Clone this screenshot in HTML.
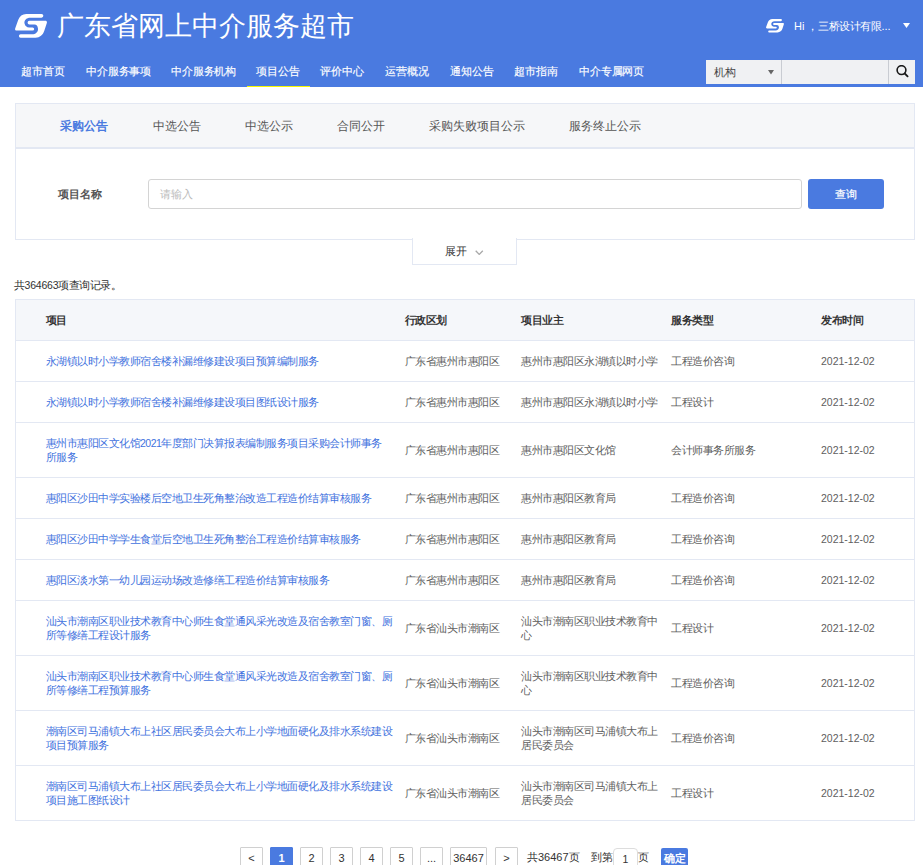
<!DOCTYPE html>
<html><head><meta charset="utf-8">
<style>
*{box-sizing:border-box;margin:0;padding:0}
html,body{width:923px;height:865px;overflow:hidden;background:#fff;font-family:"Liberation Sans",sans-serif;color:#333}
.a{position:absolute;white-space:nowrap}
#hd{position:absolute;left:0;top:0;width:923px;height:87px;background:#4a7ae0}
.w{color:#fff}
.nav{position:absolute;top:62px;font-size:11px;line-height:18px;color:#fff;-webkit-text-stroke:0.15px #fff;letter-spacing:-0.15px}
.ul{position:absolute;left:247px;top:85.5px;width:63px;height:1.5px;background:#f8f800}
.sel{position:absolute;left:706px;top:60px;width:75px;height:24px;background:#f0f1f3}
.inp{position:absolute;left:781px;top:60px;width:108px;height:24px;background:#f0f1f3;border-left:1px solid #c9ccd2}
.btn{position:absolute;left:888px;top:60px;width:27px;height:24px;background:#f0f1f3;border-left:1px solid #c9ccd2}
#panel{position:absolute;left:15px;top:103px;width:900px;height:137px;border:1px solid #e3e8f3}
#tabs{position:absolute;left:0;top:0;width:898px;height:45px;background:#f6f7f9;border-bottom:2px solid #e3e8f3}
.tab{position:absolute;top:118px;font-size:12px;line-height:17px;color:#555}
.qin{position:absolute;left:148px;top:179px;width:654px;height:30px;border:1px solid #d4d4d4;border-radius:3px}
.qbtn{position:absolute;left:808px;top:179px;width:76px;height:30px;background:#4a7ae0;border-radius:3px}
.exp{position:absolute;left:412px;top:238px;width:105px;height:27px;border:1px solid #e3e8f3;border-top:none;background:#fff}
#tbl{position:absolute;left:15px;top:299px;width:900px;height:522px;border:1px solid #e3e8f3}
.row{position:absolute;left:0;width:898px;border-bottom:1px solid #e3e8f3}
.c{position:absolute;display:flex;align-items:center;font-size:10.5px;line-height:14px;letter-spacing:-0.5px}
.th{font-weight:bold;color:#333;white-space:nowrap}
.td{color:#5e5e5e;width:140px}
.lk{color:#3f72de;width:348px}
.dt{font-size:10.5px;letter-spacing:0}
.pg{position:absolute;top:847px;width:23px;height:22px;border:1px solid #d0d0d0;border-radius:1px;font-size:11px;line-height:20px;text-align:center;color:#333;background:#fff}
.pg.on{background:#4a7ae0;border-color:#4a7ae0;color:#fff;font-weight:bold}
.pin{position:absolute;top:848px;width:25px;height:22px;border:1px solid #ddd;border-radius:4px;font-size:10.5px;line-height:20px;text-align:center;color:#333;background:#fff}
.pbtn{position:absolute;top:848px;width:27px;height:20px;background:#4a7ae0;border-radius:2px;font-size:10.5px;line-height:20px;text-align:center;color:#fff;font-weight:bold;letter-spacing:-0.5px}
</style></head><body>
<div id="hd"></div>
<svg class="a" style="left:14.9px;top:14.1px" width="32" height="23.7" viewBox="100 125 655 485"><g fill="#fff">
<path d="M330 125H643A37.5 37.5 0 0 1 643 200H410C330 200 280 260 295 320C305 370 340 400 390 400H460A32.5 32.5 0 0 1 460 465H135C105 465 95 445 105 415L165 250C195 170 250 125 330 125Z"/>
<path d="M395 265H720C750 265 760 285 750 315L700 470C670 560 610 610 520 610H215A35 35 0 0 1 215 540H450C530 540 580 480 570 420C565 370 540 340 500 340H395A37.5 37.5 0 0 1 395 265Z"/>
</g></svg>
<div class="a w" style="left:57px;top:9px;font-size:27px;line-height:34px">广东省网上中介服务超市</div>

<svg class="a" style="left:766px;top:19px" width="18" height="13.5" viewBox="100 125 655 485"><g fill="#fff">
<path d="M330 125H643A37.5 37.5 0 0 1 643 200H410C330 200 280 260 295 320C305 370 340 400 390 400H460A32.5 32.5 0 0 1 460 465H135C105 465 95 445 105 415L165 250C195 170 250 125 330 125Z"/>
<path d="M395 265H720C750 265 760 285 750 315L700 470C670 560 610 610 520 610H215A35 35 0 0 1 215 540H450C530 540 580 480 570 420C565 370 540 340 500 340H395A37.5 37.5 0 0 1 395 265Z"/>
</g></svg>
<div class="a w" style="left:794px;top:18px;font-size:11px;line-height:16px">Hi ，<span style="font-size:10.5px;letter-spacing:-0.5px">三桥设计有限</span>...</div>
<svg class="a" style="left:903px;top:23px" width="7" height="5" viewBox="0 0 7 5"><path d="M0 0H7L3.5 5Z" fill="#fff"/></svg>

<div class="nav" style="left:21px">超市首页</div>
<div class="nav" style="left:86px">中介服务事项</div>
<div class="nav" style="left:171px">中介服务机构</div>
<div class="nav" style="left:256px">项目公告</div>
<div class="nav" style="left:320px">评价中心</div>
<div class="nav" style="left:385px">运营概况</div>
<div class="nav" style="left:450px">通知公告</div>
<div class="nav" style="left:514px">超市指南</div>
<div class="nav" style="left:579px">中介专属网页</div>
<div class="ul"></div>

<div class="sel"></div>
<div class="a" style="left:714px;top:64px;font-size:11px;line-height:16px;color:#444">机构</div>
<svg class="a" style="left:767.5px;top:70px" width="6" height="4.5" viewBox="0 0 6 4.5"><path d="M0 0H6L3 4.5Z" fill="#666"/></svg>
<div class="inp"></div>
<div class="btn"></div>
<svg class="a" style="left:895px;top:65px" width="15" height="14" viewBox="0 0 15 14"><circle cx="6.5" cy="5.1" r="4.4" fill="none" stroke="#1a1a1a" stroke-width="1.6"/><path d="M9.7 8.5L12.6 11.4" stroke="#1a1a1a" stroke-width="1.8" stroke-linecap="round"/></svg>

<div id="panel"><div id="tabs"></div></div>
<div class="tab" style="left:60px;color:#4a7ae0;font-weight:bold">采购公告</div>
<div class="tab" style="left:152.5px">中选公告</div>
<div class="tab" style="left:245px">中选公示</div>
<div class="tab" style="left:336.5px">合同公开</div>
<div class="tab" style="left:429px">采购失败项目公示</div>
<div class="tab" style="left:569px">服务终止公示</div>

<div class="a" style="left:58px;top:186px;font-size:11px;line-height:16px;font-weight:bold;color:#555">项目名称</div>
<div class="qin"></div>
<div class="a" style="left:160px;top:186px;font-size:11px;line-height:16px;color:#bbb">请输入</div>
<div class="qbtn"></div>
<div class="a w" style="left:835px;top:186px;font-size:11px;line-height:16px;-webkit-text-stroke:0.2px #fff">查询</div>

<div class="exp"></div>
<div class="a" style="left:445px;top:243px;font-size:11px;line-height:16px;color:#333">展开</div>
<svg class="a" style="left:475px;top:249.5px" width="8.5" height="5.5" viewBox="0 0 8.5 5.5"><path d="M0.7 0.7L4.25 4.4L7.8 0.7" fill="none" stroke="#a8a8a8" stroke-width="1.3"/></svg>

<div class="a" style="left:14px;top:276.5px;font-size:10.5px;line-height:16px;color:#333;letter-spacing:-0.5px">共<span style="letter-spacing:-0.2px">364663</span>项查询记录。</div>

<div id="tbl">
<div class="row" style="top:0;height:41px;background:#f5f7fa"></div>
<div class="row" style="top:41px;height:41px"></div>
<div class="row" style="top:82px;height:41px"></div>
<div class="row" style="top:123px;height:55px"></div>
<div class="row" style="top:178px;height:41px"></div>
<div class="row" style="top:219px;height:41px"></div>
<div class="row" style="top:260px;height:41px"></div>
<div class="row" style="top:301px;height:55px"></div>
<div class="row" style="top:356px;height:55px"></div>
<div class="row" style="top:411px;height:55px"></div>
<div class="row" style="top:466px;border-bottom:none;height:55px"></div>
</div>

<div class="pg" style="left:240px">&lt;</div>
<div class="pg on" style="left:270px">1</div>
<div class="pg" style="left:300px">2</div>
<div class="pg" style="left:330px">3</div>
<div class="pg" style="left:360px">4</div>
<div class="pg" style="left:390px">5</div>
<div class="pg" style="left:420px">...</div>
<div class="pg" style="left:450px;width:37px">36467</div>
<div class="pg" style="left:495px">&gt;</div>
<div class="a" style="left:527px;top:849px;font-size:10.5px;line-height:16px;color:#333">共<span style="font-size:11px">36467</span>页</div>
<div class="a" style="left:591px;top:849px;font-size:10.5px;line-height:16px;color:#333;letter-spacing:-0.5px">到第</div>
<div class="pin" style="left:613px">1</div>
<div class="a" style="left:638px;top:849px;font-size:10.5px;line-height:16px;color:#333">页</div>
<div class="pbtn" style="left:661px">确定</div>
<div id="cells">
<div class="c th" style="left:45.5px;top:299px;height:41px"><span>项目</span></div>
<div class="c th" style="left:404.5px;top:299px;height:41px"><span>行政区划</span></div>
<div class="c th" style="left:521px;top:299px;height:41px"><span>项目业主</span></div>
<div class="c th" style="left:671px;top:299px;height:41px"><span>服务类型</span></div>
<div class="c th" style="left:821px;top:299px;height:41px"><span>发布时间</span></div>
<div class="c lk" style="left:45.5px;top:340px;height:41px"><span>永湖镇以时小学教师宿舍楼补漏维修建设项目预算编制服务</span></div>
<div class="c td" style="left:404.5px;top:340px;height:41px"><span>广东省惠州市惠阳区</span></div>
<div class="c td ow" style="left:521px;top:340px;height:41px"><span>惠州市惠阳区永湖镇以时小学</span></div>
<div class="c td" style="left:671px;top:340px;height:41px"><span>工程造价咨询</span></div>
<div class="c td dt" style="left:821px;top:340px;height:41px"><span>2021-12-02</span></div>
<div class="c lk" style="left:45.5px;top:381px;height:41px"><span>永湖镇以时小学教师宿舍楼补漏维修建设项目图纸设计服务</span></div>
<div class="c td" style="left:404.5px;top:381px;height:41px"><span>广东省惠州市惠阳区</span></div>
<div class="c td ow" style="left:521px;top:381px;height:41px"><span>惠州市惠阳区永湖镇以时小学</span></div>
<div class="c td" style="left:671px;top:381px;height:41px"><span>工程设计</span></div>
<div class="c td dt" style="left:821px;top:381px;height:41px"><span>2021-12-02</span></div>
<div class="c lk" style="left:45.5px;top:422px;height:55px"><span>惠州市惠阳区文化馆2021年度部门决算报表编制服务项目采购会计师事务<br>所服务</span></div>
<div class="c td" style="left:404.5px;top:422px;height:55px"><span>广东省惠州市惠阳区</span></div>
<div class="c td ow" style="left:521px;top:422px;height:55px"><span>惠州市惠阳区文化馆</span></div>
<div class="c td" style="left:671px;top:422px;height:55px"><span>会计师事务所服务</span></div>
<div class="c td dt" style="left:821px;top:422px;height:55px"><span>2021-12-02</span></div>
<div class="c lk" style="left:45.5px;top:477px;height:41px"><span>惠阳区沙田中学实验楼后空地卫生死角整治改造工程造价结算审核服务</span></div>
<div class="c td" style="left:404.5px;top:477px;height:41px"><span>广东省惠州市惠阳区</span></div>
<div class="c td ow" style="left:521px;top:477px;height:41px"><span>惠州市惠阳区教育局</span></div>
<div class="c td" style="left:671px;top:477px;height:41px"><span>工程造价咨询</span></div>
<div class="c td dt" style="left:821px;top:477px;height:41px"><span>2021-12-02</span></div>
<div class="c lk" style="left:45.5px;top:518px;height:41px"><span>惠阳区沙田中学学生食堂后空地卫生死角整治工程造价结算审核服务</span></div>
<div class="c td" style="left:404.5px;top:518px;height:41px"><span>广东省惠州市惠阳区</span></div>
<div class="c td ow" style="left:521px;top:518px;height:41px"><span>惠州市惠阳区教育局</span></div>
<div class="c td" style="left:671px;top:518px;height:41px"><span>工程造价咨询</span></div>
<div class="c td dt" style="left:821px;top:518px;height:41px"><span>2021-12-02</span></div>
<div class="c lk" style="left:45.5px;top:559px;height:41px"><span>惠阳区淡水第一幼儿园运动场改造修缮工程造价结算审核服务</span></div>
<div class="c td" style="left:404.5px;top:559px;height:41px"><span>广东省惠州市惠阳区</span></div>
<div class="c td ow" style="left:521px;top:559px;height:41px"><span>惠州市惠阳区教育局</span></div>
<div class="c td" style="left:671px;top:559px;height:41px"><span>工程造价咨询</span></div>
<div class="c td dt" style="left:821px;top:559px;height:41px"><span>2021-12-02</span></div>
<div class="c lk" style="left:45.5px;top:600px;height:55px"><span>汕头市潮南区职业技术教育中心师生食堂通风采光改造及宿舍教室门窗、厕所等修缮工程设计服务</span></div>
<div class="c td" style="left:404.5px;top:600px;height:55px"><span>广东省汕头市潮南区</span></div>
<div class="c td ow" style="left:521px;top:600px;height:55px"><span>汕头市潮南区职业技术教育中心</span></div>
<div class="c td" style="left:671px;top:600px;height:55px"><span>工程设计</span></div>
<div class="c td dt" style="left:821px;top:600px;height:55px"><span>2021-12-02</span></div>
<div class="c lk" style="left:45.5px;top:655px;height:55px"><span>汕头市潮南区职业技术教育中心师生食堂通风采光改造及宿舍教室门窗、厕所等修缮工程预算服务</span></div>
<div class="c td" style="left:404.5px;top:655px;height:55px"><span>广东省汕头市潮南区</span></div>
<div class="c td ow" style="left:521px;top:655px;height:55px"><span>汕头市潮南区职业技术教育中心</span></div>
<div class="c td" style="left:671px;top:655px;height:55px"><span>工程造价咨询</span></div>
<div class="c td dt" style="left:821px;top:655px;height:55px"><span>2021-12-02</span></div>
<div class="c lk" style="left:45.5px;top:710px;height:55px"><span>潮南区司马浦镇大布上社区居民委员会大布上小学地面硬化及排水系统建设项目预算服务</span></div>
<div class="c td" style="left:404.5px;top:710px;height:55px"><span>广东省汕头市潮南区</span></div>
<div class="c td ow" style="left:521px;top:710px;height:55px"><span>汕头市潮南区司马浦镇大布上居民委员会</span></div>
<div class="c td" style="left:671px;top:710px;height:55px"><span>工程造价咨询</span></div>
<div class="c td dt" style="left:821px;top:710px;height:55px"><span>2021-12-02</span></div>
<div class="c lk" style="left:45.5px;top:765px;height:55px"><span>潮南区司马浦镇大布上社区居民委员会大布上小学地面硬化及排水系统建设项目施工图纸设计</span></div>
<div class="c td" style="left:404.5px;top:765px;height:55px"><span>广东省汕头市潮南区</span></div>
<div class="c td ow" style="left:521px;top:765px;height:55px"><span>汕头市潮南区司马浦镇大布上居民委员会</span></div>
<div class="c td" style="left:671px;top:765px;height:55px"><span>工程设计</span></div>
<div class="c td dt" style="left:821px;top:765px;height:55px"><span>2021-12-02</span></div>
</div>
</body></html>
